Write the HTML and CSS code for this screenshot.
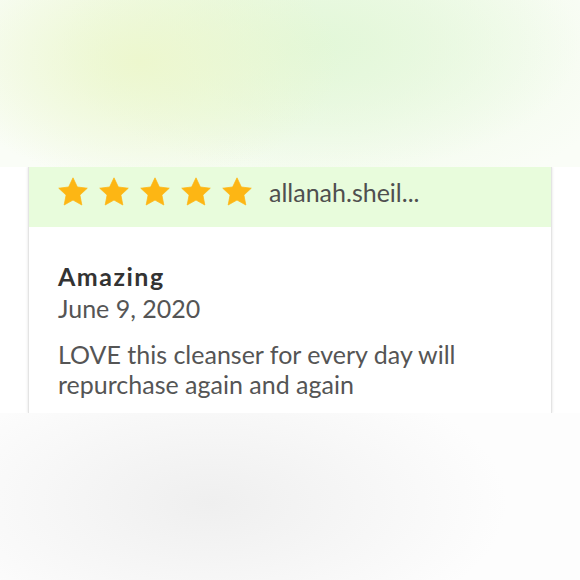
FILE: index.html
```html
<!DOCTYPE html>
<html lang="en">
<head>
  <meta charset="UTF-8" />
  <title>Review</title>
  <link rel="stylesheet" href="styles.css">
</head>
<body>
  <div class="blur-top"></div>
  <div class="review">
    <div class="review-head">
      <div class="stars">
        <svg class="star" viewBox="2 2.2 20 18.8"><path d="M12 2.5l2.9 6.1 6.6.8-4.9 4.6 1.3 6.6L12 17.3l-5.9 3.3 1.3-6.6-4.9-4.6 6.6-.8z"/></svg>
        <svg class="star" viewBox="2 2.2 20 18.8"><path d="M12 2.5l2.9 6.1 6.6.8-4.9 4.6 1.3 6.6L12 17.3l-5.9 3.3 1.3-6.6-4.9-4.6 6.6-.8z"/></svg>
        <svg class="star" viewBox="2 2.2 20 18.8"><path d="M12 2.5l2.9 6.1 6.6.8-4.9 4.6 1.3 6.6L12 17.3l-5.9 3.3 1.3-6.6-4.9-4.6 6.6-.8z"/></svg>
        <svg class="star" viewBox="2 2.2 20 18.8"><path d="M12 2.5l2.9 6.1 6.6.8-4.9 4.6 1.3 6.6L12 17.3l-5.9 3.3 1.3-6.6-4.9-4.6 6.6-.8z"/></svg>
        <svg class="star" viewBox="2 2.2 20 18.8"><path d="M12 2.5l2.9 6.1 6.6.8-4.9 4.6 1.3 6.6L12 17.3l-5.9 3.3 1.3-6.6-4.9-4.6 6.6-.8z"/></svg>
      </div>
      <span class="author">allanah.sheil...</span>
    </div>
    <div class="review-body">
      <h2 class="title">Amazing</h2>
      <div class="date">June 9, 2020</div>
      <p class="text">LOVE this cleanser for every day will repurchase again and again</p>
    </div>
  </div>
  <div class="blur-bottom"></div>
</body>
</html>
```

FILE: styles.css
```css
* { margin: 0; padding: 0; box-sizing: border-box; }
html, body { width: 100%; height: 100%; overflow: hidden; }
body {
  font-family: Lato, 'Open Sans', sans-serif;
  background: #fff;
  display: flex; flex-direction: column;
}
.blur-top {
  height: 167px; flex: none;
  position: relative; z-index: 1;
  background:
    radial-gradient(ellipse 200px 120px at 140px 62px, rgba(237, 247, 205, 0.95), transparent),
    radial-gradient(ellipse 260px 130px at 320px 45px, rgba(226, 247, 216, 0.9), transparent),
    radial-gradient(ellipse 380px 180px at 290px 50px, #eaf9e0, #fafdf7 92%);
}
.review {
  margin: 0 28px;
  background: #fff;
  border-left: 1px solid #e4e4e4;
  border-right: 1px solid #e4e4e4;
  box-shadow: -1px 0 2px rgba(0, 0, 0, 0.06), 1px 0 2px rgba(0, 0, 0, 0.06);
  flex: none;
}
.review-head {
  height: 60px;
  background: #e8fcdc;
  display: flex; align-items: center;
  padding: 0 0 12px 29px;
  gap: 17px;
}
.stars { display: flex; gap: 11px; }
.star { width: 30px; height: 29px; display: block; }
.star path { fill: #fdb614; stroke: #fdb614; stroke-width: 0.5; stroke-linejoin: round; }
.author { font-size: 25px; color: #4f4f4f; padding-top: 1px; }
.review-body { padding: 34px 29px 14px; }
.title {
  font-size: 25px; font-weight: 700; color: #333;
  letter-spacing: 1.5px; line-height: 30px;
}
.date { font-size: 25px; color: #555; line-height: 30px; margin-top: 2px; }
.text { font-size: 25px; color: #555; line-height: 30px; margin-top: 16px; }
.blur-bottom {
  flex: 1;
  position: relative; z-index: 1;
  background: radial-gradient(ellipse 330px 160px at 210px 90px, #efefef, #fdfdfd 90%);
}
```
